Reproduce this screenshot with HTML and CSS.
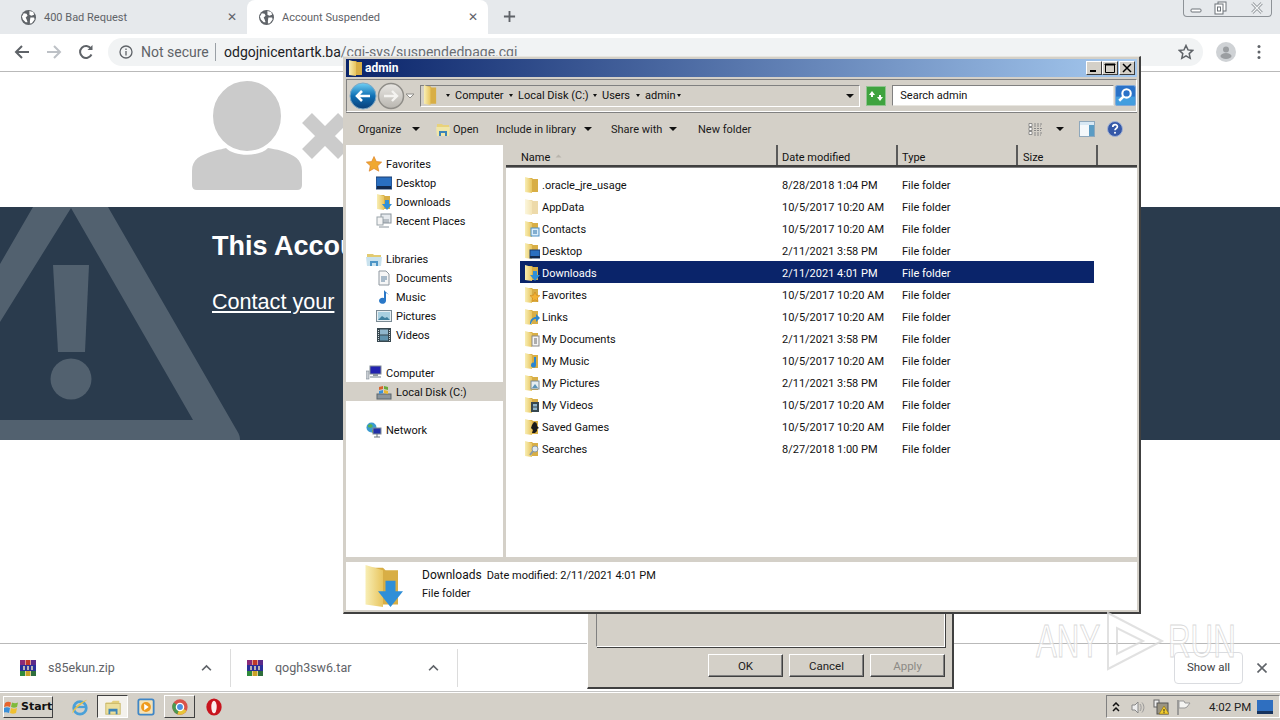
FILE: index.html
```html
<!DOCTYPE html>
<html lang="en">

<head>
    <meta charset="UTF-8">
    <title>Account Suspended</title>
    <link rel="stylesheet" href="styles.css">
</head>

<body>
    <svg class="sprite" width="0" height="0">
        <defs>
            <linearGradient id="flap" x1="0" x2="1" y1="0" y2="0">
                <stop offset="0" stop-color="#f8eeb4" />
                <stop offset="1" stop-color="#e8c55f" />
            </linearGradient>
            <linearGradient id="backBlue" x1="0" x2="0" y1="0" y2="1">
                <stop offset="0" stop-color="#6fd0f5" />
                <stop offset="0.5" stop-color="#0f6fb4" />
                <stop offset="1" stop-color="#0a3f78" />
            </linearGradient>
            <linearGradient id="backGrey" x1="0" x2="0" y1="0" y2="1">
                <stop offset="0" stop-color="#e8e6e2" />
                <stop offset="1" stop-color="#b9b6b0" />
            </linearGradient>
            <symbol id="folder" viewBox="0 0 16 16" preserveAspectRatio="none">
                <path d="M3 1h5l1 1h5v13H3z" fill="#d8ae45" />
                <path d="M1 0l7 2v14l-7-1z" fill="url(#flap)" />
            </symbol>
            <symbol id="ov-contacts" viewBox="0 0 16 16">
                <rect x="7" y="7" width="8" height="8" fill="#d8ecfa" stroke="#4d8fc4" />
                <path d="M9 10h4M9 12h4" stroke="#2b6ea6" />
            </symbol>
            <symbol id="ov-desktop" viewBox="0 0 16 16">
                <rect x="6" y="7" width="10" height="8" fill="#2a6fc0" stroke="#1d3f70" />
                <rect x="6" y="13" width="10" height="2" fill="#12294d" />
            </symbol>
            <symbol id="ov-down" viewBox="0 0 16 16">
                <path d="M9 6h4v4h3l-5 6-5-6h3z" fill="#2f8fd8" />
            </symbol>
            <symbol id="ov-star" viewBox="0 0 16 16">
                <path d="M11 5l1.500 3.200 3.500.4-2.600 2.400.7 3.500-3.100-1.800-3.100 1.800.7-3.500L6 8.600l3.500-.4z" fill="#f2b233" stroke="#c77f17" stroke-width=".5" />
            </symbol>
            <symbol id="ov-link" viewBox="0 0 16 16">
                <path d="M6 15c0-5 3-7 6-7V5l4 4-4 4v-3c-2 0-4 1-5 5z" fill="#2a86d0" />
            </symbol>
            <symbol id="ov-doc" viewBox="0 0 16 16">
                <rect x="8" y="5" width="7" height="10" fill="#f4f4f4" stroke="#8a8a8a" />
                <path d="M10 8h3M10 10h3M10 12h3" stroke="#666" />
            </symbol>
            <symbol id="ov-music" viewBox="0 0 16 16">
                <path d="M12 4v8a2.500 2.500 0 1 1-2-2.400V4z" fill="#2a86d0" />
            </symbol>
            <symbol id="ov-pic" viewBox="0 0 16 16">
                <rect x="7" y="6" width="8" height="8" fill="#e4edf2" stroke="#7a8a94" />
                <path d="M8 13l3-4 3 4z" fill="#5b94b8" />
            </symbol>
            <symbol id="ov-video" viewBox="0 0 16 16">
                <rect x="7" y="5" width="8" height="10" fill="#37474f" />
                <rect x="9" y="7" width="4" height="2.500" fill="#8fb6cc" />
                <rect x="9" y="10.500" width="4" height="2.500" fill="#8fb6cc" />
            </symbol>
            <symbol id="ov-game" viewBox="0 0 16 16">
                <path d="M10 3a3 3 0 0 1 3 3v1l2 2-2 1v2l-2 2H8l1-3-2-2 1-3z" fill="#1a1a1a" />
            </symbol>
            <symbol id="ov-search" viewBox="0 0 16 16">
                <circle cx="11" cy="8" r="3" fill="#dfe8ee" stroke="#8a9aa5" />
                <path d="M9 10l-3 4" stroke="#8a9aa5" stroke-width="2" />
            </symbol>
            <symbol id="winrar" viewBox="0 0 16 16">
                <rect x="0" y="0" width="5" height="5" fill="#8a2a78" />
                <rect x="5.500" y="0" width="5" height="5" fill="#c0392b" />
                <rect x="11" y="0" width="5" height="5" fill="#5b2a8a" />
                <rect x="0" y="5" width="16" height="6" fill="#2a2f9a" />
                <path d="M4 6v4M8 6v4M12 6v4" stroke="#e8e0c0" stroke-width="1.500" />
                <rect x="0" y="11" width="5" height="5" fill="#2f8a3c" />
                <rect x="5.500" y="11" width="5" height="5" fill="#c9a227" />
                <rect x="11" y="11" width="5" height="5" fill="#2f6e3c" />
            </symbol>
            <symbol id="globe" viewBox="0 0 16 16">
                <circle cx="8" cy="8" r="8" fill="#5f6368" />
                <path d="M3 3.500l3 .5 1 2-2 2 1 2 1 3-2 0-3-3-1-3zM9 1l4 1 1 3-3 1-2-1zM10 8l4 0 .5 2-3 4-2 .5 0-3z" fill="#fff" />
            </symbol>
        </defs>
    </svg>

    <div class="desktop">
        <div class="browser">
            <div class="tabstrip">
                <div class="tab">
                    <svg class="tab-globe"><use href="#globe" /></svg>
                    <span class="tab-title">400 Bad Request</span>
                    <span class="tab-close">&#10005;</span>
                </div>
                <div class="tab tab-active">
                    <svg class="tab-globe"><use href="#globe" /></svg>
                    <span class="tab-title">Account Suspended</span>
                    <span class="tab-close">&#10005;</span>
                </div>
                <svg class="tab-new" viewBox="0 0 14 14"><path d="M7 1v12M1 7h12" stroke="#5f6368" stroke-width="2" /></svg>
                <div class="caption-btns">
                    <svg class="cap cap-min" viewBox="0 0 29 16"><rect x="7" y="9" width="10" height="3" rx="1" fill="#fff" stroke="#6d7378" /></svg>
                    <svg class="cap cap-max" viewBox="0 0 29 16"><rect x="5" y="2" width="8" height="9" fill="#fff" stroke="#6d7378" /><rect x="2" y="4" width="8" height="10" fill="#fff" stroke="#6d7378" /><rect x="4.500" y="7" width="3" height="4" fill="none" stroke="#6d7378" /></svg>
                    <svg class="cap cap-x" viewBox="0 0 32 16"><path d="M11 3l10 10M21 3L11 13" stroke="#7d8388" stroke-width="3" /><path d="M11 3l10 10M21 3L11 13" stroke="#f4f6f7" stroke-width="1.500" /></svg>
                </div>
            </div>

            <div class="toolbar">
                <svg class="tool-ico" viewBox="0 0 16 16"><path d="M15 8H2M8 2L2 8l6 6" fill="none" stroke="#5f6368" stroke-width="2" /></svg>
                <svg class="tool-ico" viewBox="0 0 16 16"><path d="M1 8h13M8 2l6 6-6 6" fill="none" stroke="#bdc1c6" stroke-width="2" /></svg>
                <svg class="tool-ico" viewBox="0 0 16 16"><path d="M13.500 10.500A6 6 0 1 1 13 4.500" fill="none" stroke="#5f6368" stroke-width="2" /><path d="M14.500 1v5h-5z" fill="#5f6368" /></svg>
                <div class="omnibox">
                    <svg class="info-ico" viewBox="0 0 14 14"><circle cx="7" cy="7" r="6" fill="none" stroke="#5f6368" stroke-width="1.300" /><path d="M7 6v4.500M7 3.500v1.500" stroke="#5f6368" stroke-width="1.300" /></svg>
                    <span class="not-secure">Not secure</span>
                    <span class="omni-sep"></span>
                    <span class="url">odgojnicentartk.ba<span class="url-path">/cgi-sys/suspendedpage.cgi</span></span>
                    <svg class="star-ico" viewBox="0 0 16 16"><path d="M8 1.500l2 4.400 4.800.5-3.600 3.200 1 4.700L8 11.900l-4.200 2.400 1-4.700L1.200 6.400 6 5.900z" fill="none" stroke="#5f6368" stroke-width="1.500" /></svg>
                </div>
                <svg class="avatar" viewBox="0 0 20 20"><circle cx="10" cy="10" r="10" fill="#cfd2d5" /><circle cx="10" cy="7.500" r="3" fill="#9b9ea1" /><ellipse cx="10" cy="14" rx="5.500" ry="3" fill="#9b9ea1" /></svg>
                <svg class="menu-dots" viewBox="0 0 4 16"><circle cx="2" cy="2.500" r="1.500" fill="#5f6368" /><circle cx="2" cy="8" r="1.500" fill="#5f6368" /><circle cx="2" cy="13.500" r="1.500" fill="#5f6368" /></svg>
            </div>

            <div class="page">
                <svg class="user-ico" viewBox="0 0 160 110">
                    <path d="M0 109V90C0 78 8 74 22 70c6-2 10-2 12-3 8 9 34 9 42 0 4 1 8 1 14 3 12 4 20 8 20 20v14q0 5-5 5H5q-5 0-5-5z" fill="#cbcbcb" />
                    <ellipse cx="55" cy="35" rx="35.500" ry="36.500" fill="#cbcbcb" stroke="#fff" stroke-width="3" />
                    <path d="M115 37l36 36M151 37l-36 36" stroke="#cbcbcb" stroke-width="14" />
                </svg>
                <div class="banner">
                    <svg class="banner-ico" viewBox="0 0 240 233">
                        <path d="M33 0h75l128 222c3 5 4 7 4 11H0v-176zM71 1L0 115v98h193z" fill="#52616f" fill-rule="evenodd" />
                        <path d="M53 58h36l-4 87H58z" fill="#52616f" />
                        <circle cx="71" cy="172" r="20.500" fill="#52616f" />
                    </svg>
                    <!-- the explorer window hides the rest of both lines -->
                    <h1 class="banner-title">This Account</h1>
                    <a class="banner-link">Contact your</a>
                </div>
            </div>

            <div class="downloads">
                <div class="dl-item">
                    <svg class="dl-ico"><use href="#winrar" /></svg>
                    <span class="dl-name">s85ekun.zip</span>
                    <svg class="dl-chev" viewBox="0 0 10 6"><path d="M1 5.500l4-4 4 4" fill="none" stroke="#5f6368" stroke-width="1.500" /></svg>
                </div>
                <div class="dl-item">
                    <svg class="dl-ico"><use href="#winrar" /></svg>
                    <span class="dl-name">qogh3sw6.tar</span>
                    <svg class="dl-chev" viewBox="0 0 10 6"><path d="M1 5.500l4-4 4 4" fill="none" stroke="#5f6368" stroke-width="1.500" /></svg>
                </div>
                <span class="dl-show">Show all</span>
                <svg class="dl-close" viewBox="0 0 10 10"><path d="M.5.500l9 9M9.500.500l-9 9" stroke="#5f6368" stroke-width="1.600" /></svg>
            </div>
        </div>

        <div class="taskbar">
            <div class="start-btn">
                <svg class="start-logo" viewBox="0 0 16 16">
                    <path d="M1 4c2-1.500 4-1.500 6-.5L6 8C4 7 2.500 7 0 8z" fill="#e8642c" />
                    <path d="M8 3.500c2 1 4 1 6 0L13 8c-2 1-4 1-6 0z" fill="#7fba3a" />
                    <path d="M0 9c2-1 4-1 6 0l-1 5c-2-1-4-1-6 0z" fill="#3a8fd8" />
                    <path d="M7 9c2 1 4 1 6 0l-1 5c-2 1-4 1-6 0z" fill="#f0c030" />
                </svg>
                Start
            </div>
            <svg class="task-ico task-ie" viewBox="0 0 20 20"><ellipse cx="10" cy="11" rx="7" ry="7" fill="none" stroke="#4aa0d8" stroke-width="3" /><path d="M4 10h13" stroke="#4aa0d8" stroke-width="2.500" /><path d="M2 17C0 13 12 3 18 2c-3 3-12 8-16 15z" fill="#e8c24a" /></svg>
            <div class="task-btn task-btn-on">
                <svg class="task-ico" viewBox="0 0 20 20"><path d="M2 5h6l2-2h7v4H2z" fill="#e3cf7c" /><rect x="2" y="6" width="16" height="12" fill="#ecdf9b" stroke="#c9b76a" /><path d="M5 18v-6h10v6h-2v-3H7v3z" fill="#3d85b8" /></svg>
            </div>
            <svg class="task-ico task-wmp" viewBox="0 0 20 20"><rect x="1.500" y="1.500" width="17" height="17" rx="2" fill="#f4e2b8" stroke="#3f86c6" stroke-width="2" /><circle cx="10" cy="10" r="5.500" fill="#ee9a1e" /><path d="M8 6.500l5 3.500-5 3.500z" fill="#fff" /></svg>
            <div class="task-btn task-btn-up">
                <svg class="task-ico" viewBox="0 0 20 20"><circle cx="10" cy="10" r="8.500" fill="#d9534a" /><path d="M10 10L2.600 14.200A8.500 8.500 0 0 1 3 5z" fill="#4a9a50" /><path d="M10 10l7.400 4.200A8.500 8.500 0 0 1 7 18z" fill="#e8c53a" /><path d="M10 10L7 18a8.500 8.500 0 0 1-4.400-3.800z" fill="#4a9a50" /><circle cx="10" cy="10" r="4" fill="#4a8fe0" stroke="#fff" stroke-width="1.500" /></svg>
            </div>
            <svg class="task-ico task-opera" viewBox="0 0 20 20"><ellipse cx="10" cy="10" rx="8.500" ry="9.500" fill="#c8141e" /><ellipse cx="10" cy="10" rx="3" ry="7" fill="#fbeeee" /></svg>
            <div class="tray">
                <svg class="tray-chev" viewBox="0 0 8 10"><path d="M1 4l3-3 3 3M1 9l3-3 3 3" fill="none" stroke="#111" stroke-width="1.500" /></svg>
                <svg class="tray-ico tray-speaker" viewBox="0 0 16 16"><path d="M3 6h3l3-3v11l-3-3H3z" fill="#eee" stroke="#888" /><path d="M11 5c1.500 2 1.500 5 0 7M13 3.500c2.500 3 2.500 7 0 10" fill="none" stroke="#999" /></svg>
                <svg class="tray-ico tray-net" viewBox="0 0 16 16"><rect x="1" y="1" width="5" height="7" fill="#eee" stroke="#666" /><rect x="4" y="4" width="11" height="11" fill="#9a9482" stroke="#555" /><path d="M11 7l5 8H6z" fill="#f2cc2e" stroke="#8a6d10" stroke-width=".6" /><path d="M11 10v2.500M11 13.200v1" stroke="#222" /></svg>
                <svg class="tray-ico tray-flag" viewBox="0 0 16 16"><path d="M3 1v15" stroke="#888" stroke-width="1.500" /><path d="M4 2h5l1 2h5l-3 4-2 1H4z" fill="#f4f4f2" stroke="#999" /></svg>
                <span class="clock">4:02 PM</span>
                <svg class="tray-ico tray-desk" viewBox="0 0 16 16"><rect x="0" y="1" width="16" height="14" fill="#2f6fc0" /><rect x="0" y="12" width="16" height="3" fill="#16335e" /></svg>
            </div>
        </div>

        <!-- dialog behind the explorer window -->
        <div class="props">
            <div class="props-group"></div>
            <div class="props-btns">
                <span class="win-btn">OK</span>
                <span class="win-btn">Cancel</span>
                <span class="win-btn win-btn-off">Apply</span>
            </div>
        </div>

        <div class="explorer">
            <div class="titlebar">
                <svg class="title-ico"><use href="#folder" /></svg>
                <span class="title-text">admin</span>
                <div class="title-btns">
                    <span class="title-btn"><svg viewBox="0 0 14 12"><rect x="3" y="8" width="6" height="2" fill="#000" /></svg></span>
                    <span class="title-btn"><svg viewBox="0 0 14 12"><path d="M2.500 2.500h9v8h-9zM2 2h10v1H2z" fill="none" stroke="#000" /></svg></span>
                    <span class="title-btn title-btn-x"><svg viewBox="0 0 14 12"><path d="M3 2l8 8M11 2l-8 8" stroke="#000" stroke-width="1.500" /></svg></span>
                </div>
            </div>

            <div class="addressrow">
                <svg class="nav-btns" viewBox="0 0 70 30">
                    <circle cx="15" cy="15" r="13" fill="url(#backBlue)" stroke="#7fa8c4" />
                    <path d="M22 15H10M14 10l-5 5 5 5" fill="none" stroke="#fff" stroke-width="2.600" />
                    <circle cx="43" cy="15" r="12.500" fill="url(#backGrey)" stroke="#8f8d88" stroke-width="1.500" />
                    <path d="M36 15h12M44 10l5 5-5 5" fill="none" stroke="#f4f3f0" stroke-width="2.400" />
                    <path d="M58 13l4 4 4-4z" fill="#fff" stroke="#8f8d88" />
                </svg>
                <div class="addressbox">
                    <svg class="crumb-folder"><use href="#folder" /></svg>
                    <span class="caret crumb-caret"></span><span class="crumb crumb-1">Computer</span>
                    <span class="caret crumb-caret"></span><span class="crumb crumb-2">Local Disk (C:)</span>
                    <span class="caret crumb-caret"></span><span class="crumb crumb-3">Users</span>
                    <span class="caret crumb-caret"></span><span class="crumb crumb-4">admin</span>
                    <span class="caret crumb-caret"></span>
                    <span class="caret caret-big address-drop"></span>
                </div>
                <svg class="refresh-btn" viewBox="0 0 20 20">
                    <rect x=".5" y=".5" width="19" height="19" fill="#3fa33f" stroke="#8fc48f" />
                    <path d="M3 9l3-4 3 4H7v2H5V9zM17 11l-3 4-3-4h2V9h2v2z" fill="#fff" />
                </svg>
                <div class="searchbox">Search admin</div>
                <svg class="search-btn" viewBox="0 0 20 20">
                    <rect x=".5" y=".5" width="19" height="19" rx="2" fill="#2a72c8" stroke="#7fa8d8" />
                    <rect x="1" y="11" width="18" height="8" fill="#4fb0e8" opacity=".7" />
                    <circle cx="11" cy="8" r="4" fill="none" stroke="#fff" stroke-width="2" />
                    <path d="M8 11l-4 4" stroke="#fff" stroke-width="2.400" />
                </svg>
            </div>

            <div class="cmdbar">
                <span class="cmd cmd-org">Organize<span class="caret caret-big"></span></span>
                <span class="cmd cmd-open">
                    <svg class="ico" viewBox="0 0 16 16"><path d="M2 3h5l1 1h6v10H2z" fill="#e8d27c" /><path d="M1 6h14l-1 9H2z" fill="#f0e6a8" /><path d="M4 15v-5h8v5h-2v-3H6v3z" fill="#3d85b8" /></svg>
                    Open
                </span>
                <span class="cmd cmd-lib">Include in library<span class="caret caret-big"></span></span>
                <span class="cmd cmd-share">Share with<span class="caret caret-big"></span></span>
                <span class="cmd">New folder</span>
                <div class="cmd-right">
                    <svg class="view-ico" viewBox="0 0 16 14"><path d="M1 1.500h3v3H1zM1 5.500h3v3H1zM1 9.500h3v3H1z" fill="#fff" stroke="#777" stroke-width=".8" /><path d="M6 2h9M6 4h7M6 6.500h9M6 8.500h7M6 11h9M6 13h7" stroke="#888" stroke-dasharray="2 1" /></svg>
                    <span class="caret caret-big view-caret"></span>
                    <svg class="pane-ico" viewBox="0 0 16 16"><rect x=".5" y=".5" width="15" height="15" fill="#f4f8fb" stroke="#8fa8bc" /><rect x="1" y="1" width="14" height="3" fill="#d8e8f4" /><rect x="10" y="4" width="5" height="11" fill="#5b9cc4" /></svg>
                    <svg class="help-ico" viewBox="0 0 16 16"><circle cx="8" cy="8" r="7.500" fill="#3558a8" stroke="#9fb0d4" /><path d="M5.800 6c0-3 4.600-3 4.600-.3 0 1.800-2.400 1.800-2.400 3.500" fill="none" stroke="#fff" stroke-width="1.700" /><circle cx="8" cy="11.800" r="1" fill="#fff" /></svg>
                </div>
            </div>

            <div class="panes">
                <div class="navpane">
                    <div class="nav-group">
                        <div class="nav-item nav-top"><svg class="ico" viewBox="0 0 16 16"><path d="M8 .5l2.300 5 5.400.6-4 3.700 1.100 5.400L8 12.500l-4.800 2.700 1.100-5.400-4-3.700 5.400-.6z" fill="#f0a830" stroke="#d87a20" stroke-width=".6" /></svg>Favorites</div>
                        <div class="nav-item"><svg class="ico" viewBox="0 0 16 16"><rect x="0" y="2" width="16" height="12" fill="#2a6fc0" stroke="#1d3f70" /><rect x="1" y="11" width="14" height="3" fill="#12294d" /></svg>Desktop</div>
                        <div class="nav-item"><svg class="ico"><use href="#folder" /><use href="#ov-down" /></svg>Downloads</div>
                        <div class="nav-item"><svg class="ico" viewBox="0 0 16 16"><rect x="5" y="1" width="10" height="9" fill="#e6eaee" stroke="#8a949c" /><rect x="1" y="4" width="6" height="8" fill="#f4f4f4" stroke="#9aa4aa" /><path d="M7 7h6M7 9h6M3 14h10" stroke="#8a949c" /></svg>Recent Places</div>
                    </div>
                    <div class="nav-group">
                        <div class="nav-item nav-top"><svg class="ico" viewBox="0 0 16 16"><path d="M1 3h6l1 1h7v10H1z" fill="#e2cb72" /><path d="M0 6h16l-1 9H1z" fill="#c9e2ee" /><path d="M4 15v-5h8v5h-2v-3H6v3z" fill="#4d95c6" /></svg>Libraries</div>
                        <div class="nav-item"><svg class="ico" viewBox="0 0 16 16"><path d="M3 1h7l3 3v11H3z" fill="#f6f6f6" stroke="#8f98a0" /><path d="M5 7h6M5 9h6M5 11h4" stroke="#5b7f9c" /></svg>Documents</div>
                        <div class="nav-item"><svg class="ico" viewBox="0 0 16 16"><path d="M10 1v11a3.500 3 0 1 1-2-3V1c1 2 4 3 5 5-1-1-2-1.500-3-2z" fill="#2a78c8" /></svg>Music</div>
                        <div class="nav-item"><svg class="ico" viewBox="0 0 16 16"><rect x=".5" y="2.500" width="15" height="11" fill="#e6eef2" stroke="#7a8a94" /><rect x="2" y="4" width="12" height="8" fill="#a8cfe0" /><path d="M2 12l4-4 3 2 2-1 3 3z" fill="#3e7f9e" /></svg>Pictures</div>
                        <div class="nav-item"><svg class="ico" viewBox="0 0 16 16"><rect x="1" y="1" width="14" height="14" fill="#37474f" /><rect x="4" y="2.500" width="8" height="5" fill="#8fb6cc" /><rect x="4" y="8.500" width="8" height="5" fill="#5f92ad" /><path d="M2.500 3v11M13.500 3v11" stroke="#cfd8dc" stroke-dasharray="1 1" /></svg>Videos</div>
                    </div>
                    <div class="nav-group">
                        <div class="nav-item nav-top"><svg class="ico" viewBox="0 0 16 16"><rect x="4" y="1" width="11" height="8" fill="#2222b0" stroke="#7f8a94" /><rect x="7" y="9" width="5" height="2" fill="#8f98a0" /><rect x="4" y="11" width="11" height="2" fill="#b8c0c6" /><rect x="0" y="6" width="3" height="8" fill="#c8cdd2" stroke="#7f8a94" stroke-width=".6" /></svg>Computer</div>
                        <div class="nav-item nav-on"><svg class="ico" viewBox="0 0 16 16"><rect x="1" y="10" width="14" height="5" fill="#8a949c" stroke="#5d666c" /><path d="M3 3l4-1v3l-4 1z" fill="#d8642c" /><path d="M8 2l4 1v3l-4-1z" fill="#6aa83a" /><path d="M3 7l4-1v3l-4 1z" fill="#3a8fd8" /><path d="M8 6l4 1v3l-4-1z" fill="#eab82f" /></svg>Local Disk (C:)</div>
                    </div>
                    <div class="nav-group">
                        <div class="nav-item nav-top"><svg class="ico" viewBox="0 0 16 16"><circle cx="5.500" cy="5.500" r="5" fill="#3a9ad0" /><path d="M2 3l3-1 2 2-2 2-3-1zM6 8l2 0 0 2-2 1z" fill="#58b050" /><rect x="7" y="6" width="8" height="6" fill="#2230a8" stroke="#7f8a94" /><path d="M11 12v3M8 15h6" stroke="#6a747c" /></svg>Network</div>
                    </div>
                </div>

                <div class="content">
                    <div class="colhead">
                        <span class="col col-name">Name<svg class="sort-ico" viewBox="0 0 7 4"><path d="M3.500.5L6.500 3.500H.5z" fill="#b8b4ac" /></svg></span>
                        <span class="col col-date">Date modified</span>
                        <span class="col col-type">Type</span>
                        <span class="col col-size">Size</span>
                        <span class="col col-rest"></span>
                    </div>
                    <div class="filelist">
                        <div class="row"><span class="cell-name"><svg class="ico"><use href="#folder" /></svg>.oracle_jre_usage</span><span class="cell-date">8/28/2018 1:04 PM</span><span>File folder</span></div>
                        <div class="row"><span class="cell-name"><svg class="ico ico-hidden"><use href="#folder" /></svg>AppData</span><span class="cell-date">10/5/2017 10:20 AM</span><span>File folder</span></div>
                        <div class="row"><span class="cell-name"><svg class="ico"><use href="#folder" /><use href="#ov-contacts" /></svg>Contacts</span><span class="cell-date">10/5/2017 10:20 AM</span><span>File folder</span></div>
                        <div class="row"><span class="cell-name"><svg class="ico"><use href="#folder" /><use href="#ov-desktop" /></svg>Desktop</span><span class="cell-date">2/11/2021 3:58 PM</span><span>File folder</span></div>
                        <div class="row row-on"><span class="cell-name"><svg class="ico"><use href="#folder" /><use href="#ov-down" /></svg>Downloads</span><span class="cell-date">2/11/2021 4:01 PM</span><span>File folder</span></div>
                        <div class="row"><span class="cell-name"><svg class="ico"><use href="#folder" /><use href="#ov-star" /></svg>Favorites</span><span class="cell-date">10/5/2017 10:20 AM</span><span>File folder</span></div>
                        <div class="row"><span class="cell-name"><svg class="ico"><use href="#folder" /><use href="#ov-link" /></svg>Links</span><span class="cell-date">10/5/2017 10:20 AM</span><span>File folder</span></div>
                        <div class="row"><span class="cell-name"><svg class="ico"><use href="#folder" /><use href="#ov-doc" /></svg>My Documents</span><span class="cell-date">2/11/2021 3:58 PM</span><span>File folder</span></div>
                        <div class="row"><span class="cell-name"><svg class="ico"><use href="#folder" /><use href="#ov-music" /></svg>My Music</span><span class="cell-date">10/5/2017 10:20 AM</span><span>File folder</span></div>
                        <div class="row"><span class="cell-name"><svg class="ico"><use href="#folder" /><use href="#ov-pic" /></svg>My Pictures</span><span class="cell-date">2/11/2021 3:58 PM</span><span>File folder</span></div>
                        <div class="row"><span class="cell-name"><svg class="ico"><use href="#folder" /><use href="#ov-video" /></svg>My Videos</span><span class="cell-date">10/5/2017 10:20 AM</span><span>File folder</span></div>
                        <div class="row"><span class="cell-name"><svg class="ico"><use href="#folder" /><use href="#ov-game" /></svg>Saved Games</span><span class="cell-date">10/5/2017 10:20 AM</span><span>File folder</span></div>
                        <div class="row"><span class="cell-name"><svg class="ico"><use href="#folder" /><use href="#ov-search" /></svg>Searches</span><span class="cell-date">8/27/2018 1:00 PM</span><span>File folder</span></div>
                    </div>
                </div>
            </div>

            <div class="details">
                <svg class="details-ico" viewBox="0 0 16 16" preserveAspectRatio="none"><use href="#folder" /><use href="#ov-down" /></svg>
                <div class="details-text">
                    <div class="details-line"><span class="details-name">Downloads</span><span>Date modified: 2/11/2021 4:01 PM</span></div>
                    <div>File folder</div>
                </div>
            </div>
        </div>

        <!-- watermark over everything -->
        <div class="watermark">
            <span class="wm-text">ANY</span>
            <svg class="wm-play" viewBox="0 0 60 62"><path d="M3 3v56l54-28zM12 18v26l26-13z" fill="none" stroke="#d9d9d9" stroke-width="2" opacity=".8" /></svg>
            <span class="wm-text">RUN</span>
        </div>
    </div>
</body>

</html>
```
FILE: styles.css
```css
* {
    margin: 0;
    padding: 0;
    box-sizing: border-box;
}

body {
    width: 1280px;
    height: 720px;
    overflow: hidden;
    font-family: Roboto, "Liberation Sans", sans-serif;
    font-size: 11px;
    color: #111;
}

.sprite {
    position: absolute;
}

svg {
    display: block;
    flex: none;
}

.desktop {
    position: relative;
    width: 1280px;
    height: 720px;
    overflow: hidden;
    display: flex;
    flex-direction: column;
    background: #fff;
}

.browser {
    flex: 1;
    display: flex;
    flex-direction: column;
    min-height: 0;
}

/* tab strip */
.tabstrip {
    height: 34px;
    flex: none;
    display: flex;
    background: #e6e9ec;
    padding-left: 8px;
    position: relative;
}

.tab {
    width: 239px;
    height: 34px;
    display: flex;
    align-items: center;
    padding: 0 10px 0 13px;
    color: #5f6368;
    font-size: 11px;
}

.tab-active {
    background: #fff;
    border-radius: 8px 8px 0 0;
    width: 241px;
    padding-left: 12px;
}

.tab-globe {
    width: 15px;
    height: 15px;
    margin-right: 8px;
}

.tab-title {
    flex: 1;
}

.tab-close {
    font-size: 12px;
    color: #5f6368;
}

.tab-new {
    width: 13px;
    height: 13px;
    margin: 10px 0 0 15px;
}

.caption-btns {
    position: absolute;
    right: 8px;
    top: 0;
    height: 17px;
    width: 89px;
    display: flex;
    border: 1px solid #8d9297;
    border-top: 0;
    border-radius: 0 0 4px 4px;
}

.cap {
    height: 16px;
    width: 29px;
}

.cap-x {
    width: 30px;
    margin-left: auto;
}

/* address toolbar */
.toolbar {
    height: 38px;
    flex: none;
    display: flex;
    align-items: center;
    padding: 0 14px 1px;
    background: #fff;
    border-bottom: 1px solid #b9b9b9;
}

.tool-ico {
    width: 16px;
    height: 16px;
    margin-right: 16px;
}

.tool-ico:nth-child(3) {
    margin-right: 14px;
}

.omnibox {
    width: 1095px;
    height: 28px;
    display: flex;
    align-items: center;
    border-radius: 14px;
    background: #f1f3f4;
    padding-left: 11px;
    color: #5f6368;
}

.info-ico {
    width: 14px;
    height: 14px;
    margin-right: 8px;
}

.not-secure {
    font-size: 14px;
    width: 74px;
}

.omni-sep {
    width: 1px;
    height: 18px;
    background: #9aa0a6;
    margin-right: 8px;
}

.url {
    font-size: 14px;
    color: #202124;
    flex: 1;
}

.url-path {
    color: #6a6e73;
}

.star-ico {
    width: 16px;
    height: 16px;
    margin-right: 9px;
}

.avatar {
    width: 20px;
    height: 20px;
    margin-left: 13px;
}

.menu-dots {
    width: 4px;
    height: 16px;
    margin-left: 21px;
}

/* page behind the windows */
.page {
    flex: 1;
    background: #fff;
    min-height: 0;
}

.user-ico {
    width: 160px;
    height: 110px;
    margin: 9px 0 0 192px;
}

.banner {
    position: relative;
    height: 233px;
    margin-top: 16px;
    background: #2a3b4d;
    padding: 23px 0 0 212px;
    color: #fff;
    font-family: "Liberation Sans", Arial, sans-serif;
}

.banner-ico {
    position: absolute;
    left: 0;
    top: 0;
    width: 240px;
    height: 233px;
}

.banner-title {
    position: relative;
    font-size: 27px;
    line-height: 32px;
    font-weight: bold;
}

.banner-link {
    position: relative;
    display: inline-block;
    font-size: 21.600px;
    line-height: 26px;
    margin-top: 27px;
    text-decoration: underline;
}

/* download shelf */
.downloads {
    height: 49px;
    flex: none;
    display: flex;
    align-items: center;
    border-top: 1px solid #b9b9b9;
    border-bottom: 1px solid #c4c4c4;
    background: #fff;
}

.dl-item {
    width: 227px;
    height: 38px;
    display: flex;
    align-items: center;
    padding: 0 18px 0 16px;
    border-right: 1px solid #dcdcdc;
    color: #5f6368;
    font-size: 12.500px;
}

.dl-item:first-child {
    width: 231px;
    padding-left: 20px;
}

.dl-ico {
    width: 16px;
    height: 16px;
    margin-right: 12px;
}

.dl-name {
    flex: 1;
}

.dl-chev {
    width: 11px;
    height: 7px;
}

.dl-show {
    margin-left: auto;
    width: 69px;
    height: 32px;
    display: flex;
    align-items: center;
    justify-content: center;
    padding-bottom: 2px;
    border: 1px solid #dadce0;
    border-radius: 4px;
    color: #3c4043;
    font-size: 11.500px;
}

.dl-close {
    width: 10px;
    height: 10px;
    margin: 0 13px 0 14px;
}

/* windows taskbar */
.taskbar {
    height: 28px;
    flex: none;
    display: flex;
    align-items: center;
    background: #d4d0c8;
    border-top: 1px solid #fff;
    padding: 0 0 0 3px;
}

.start-btn {
    width: 50px;
    height: 22px;
    display: flex;
    align-items: center;
    font-weight: bold;
    font-size: 11px;
    font-family: "DejaVu Sans", sans-serif;
    gap: 1px;
    background: #d4d0c8;
    border: 1px solid;
    border-color: #fff #404040 #404040 #fff;
}

.start-logo {
    width: 16px;
    height: 16px;
}

.task-ico {
    width: 18px;
    height: 18px;
}

.task-ie {
    margin-left: 18px;
}

.task-btn {
    height: 23px;
    display: flex;
    align-items: center;
    justify-content: center;
    border: 1px solid;
}

.task-btn-on {
    width: 31px;
    margin-left: 8px;
    background: #f3f1ec;
    border-color: #404040 #fff #fff #404040;
}

.task-btn-up {
    width: 31px;
    margin-left: 9px;
    border-color: #fff #404040 #404040 #fff;
}

.task-wmp {
    margin-left: 9px;
}

.task-opera {
    margin-left: 10px;
}

.tray {
    margin-left: auto;
    width: 174px;
    height: 23px;
    display: flex;
    align-items: center;
    border: 1px solid;
    border-color: #808080 #fff #fff #808080;
    padding-left: 5px;
}

.tray-chev {
    width: 8px;
    height: 10px;
}

.tray-ico {
    width: 16px;
    height: 16px;
}

.tray-speaker {
    margin-left: 9px;
}

.tray-net {
    margin-left: 8px;
}

.tray-flag {
    margin-left: 6px;
}

.clock {
    margin-left: 18px;
    width: 48px;
    color: #222;
    font-size: 11.500px;
}

/* dialog under the explorer window */
.props {
    position: absolute;
    left: 587px;
    top: 600px;
    width: 367px;
    height: 89px;
    display: flex;
    flex-direction: column;
    background: #d4d0c8;
    border: 1px solid;
    border-color: #fff #404040 #404040 #fff;
    border-width: 1px 2px 2px 1px;
    padding: 0 7px 10px 8px;
}

.props-group {
    flex: 1;
    border: 1px solid;
    border-color: #808080 #fff #fff #808080;
    box-shadow: 1px 1px 0 #404040;
    background: #d4d0c8;
    margin-bottom: 7px;
}

.props-btns {
    display: flex;
    justify-content: flex-end;
    gap: 6px;
}

.win-btn {
    width: 75px;
    height: 23px;
    display: flex;
    align-items: center;
    justify-content: center;
    background: #d4d0c8;
    border: 1px solid;
    border-color: #fff #404040 #404040 #fff;
    box-shadow: inset -1px -1px 0 #808080;
    font-size: 11.500px;
    color: #222;
}

.win-btn-off {
    color: #8c8a85;
}

/* explorer window */
.explorer {
    position: absolute;
    left: 343px;
    top: 56px;
    width: 798px;
    height: 558px;
    display: flex;
    flex-direction: column;
    background: #d4d0c8;
    border: 1px solid;
    border-width: 1px 2px 2px 1px;
    border-color: #e8e6e0 #404040 #404040 #d4d0c8;
    padding: 2px;
}

.titlebar {
    height: 18px;
    flex: none;
    display: flex;
    align-items: center;
    padding: 0 2px;
    background: linear-gradient(to right, #0a246a, #a6caf0);
    color: #fff;
    font-weight: bold;
    font-size: 12px;
}

.title-ico {
    width: 16px;
    height: 16px;
    margin-right: 1px;
}

.title-btns {
    margin-left: auto;
    display: flex;
}

.title-btn {
    width: 16px;
    height: 14px;
    background: #d4d0c8;
    border: 1px solid;
    border-color: #fff #404040 #404040 #fff;
}

.title-btn-x {
    margin-left: 1px;
}

.title-btn svg {
    width: 14px;
    height: 12px;
}

.addressrow {
    height: 33px;
    flex: none;
    margin-top: 2px;
    display: flex;
    align-items: center;
    border: 1px solid;
    border-color: #808080 #fff #fff #808080;
    box-shadow: 0 1px 0 #808080;
    padding-left: 1px;
}

.nav-btns {
    width: 70px;
    height: 30px;
    margin-right: 2px;
}

.addressbox {
    width: 441px;
    height: 22px;
    display: flex;
    align-items: center;
    padding-bottom: 1px;
    border: 1px solid;
    border-color: #808080 #fff #fff #808080;
    padding-left: 2px;
    position: relative;
}

.crumb-folder {
    width: 15px;
    height: 20px;
    margin-right: 8px;
}

.caret {
    display: inline-block;
    flex: none;
    width: 0;
    height: 0;
    border-left: 2.500px solid transparent;
    border-right: 2.500px solid transparent;
    border-top: 3px solid #111;
}

.caret-big {
    border-left-width: 4px;
    border-right-width: 4px;
    border-top-width: 4px;
}

.crumb-caret {
    margin-right: 5px;
}

.crumb {
    white-space: nowrap;
}

.crumb-1 {
    width: 54px;
}

.crumb-2 {
    width: 75px;
}

.crumb-3 {
    width: 34px;
}

.crumb-4 {
    width: 32px;
}

.address-drop {
    position: absolute;
    right: 5px;
    top: 8px;
}

.refresh-btn {
    width: 20px;
    height: 20px;
    margin-left: 6px;
}

.searchbox {
    width: 222px;
    height: 21px;
    margin-left: 6px;
    background: #fff;
    border: 1px solid;
    border-color: #808080 #e8e6e0 #e8e6e0 #808080;
    padding-left: 7px;
    line-height: 19px;
}

.search-btn {
    width: 21px;
    height: 21px;
    margin-left: 1px;
}

.cmdbar {
    height: 33px;
    flex: none;
    display: flex;
    align-items: center;
    padding: 1px 0 0 12px;
    color: #1a1a1a;
}

.cmd {
    display: flex;
    align-items: center;
}

.cmd .caret {
    margin-left: 7px;
}

.cmd-org {
    width: 77px;
}

.cmd-org .caret {
    margin-left: 11px;
}

.cmd-open {
    width: 61px;
    gap: 2px;
}

.cmd-lib {
    width: 115px;
}

.cmd-lib .caret {
    margin-left: 8px;
}

.cmd-share {
    width: 87px;
}

.cmd-right {
    margin-left: auto;
    display: flex;
    align-items: center;
    padding-right: 14px;
}

.view-ico {
    width: 16px;
    height: 14px;
}

.view-caret {
    margin-left: 12px;
}

.pane-ico {
    width: 16px;
    height: 16px;
    margin-left: 15px;
}

.help-ico {
    width: 16px;
    height: 16px;
    margin-left: 12px;
}

.panes {
    flex: 1;
    min-height: 0;
    display: flex;
    gap: 3px;
}

.navpane {
    width: 157px;
    background: #fff;
    padding-top: 9px;
}

.nav-group {
    margin-bottom: 19px;
}

.nav-item {
    height: 19px;
    display: flex;
    align-items: center;
    gap: 4px;
    padding: 1px 0 0 30px;
}

.nav-top {
    padding-left: 20px;
}

.nav-on {
    background: #d4d0c8;
}

.ico {
    width: 16px;
    height: 16px;
}

.ico-hidden {
    opacity: .45;
}

.content {
    flex: 1;
    background: #fff;
    display: flex;
    flex-direction: column;
}

.colhead {
    height: 22px;
    flex: none;
    display: flex;
    background: #d4d0c8;
    border-bottom: 2px solid #404040;
    box-shadow: 0 1px 0 #808080;
}

.col {
    display: flex;
    align-items: center;
    border-right: 2px solid #5a5a5a;
    padding: 5px 0 0 5px;
}

.col-name {
    width: 272px;
    padding-left: 15px;
}

.col-date,
.col-type {
    width: 120px;
    padding-left: 4px;
}

.col-size {
    width: 80px;
}

.col-rest {
    flex: 1;
    border-right: 0;
}

.sort-ico {
    width: 7px;
    height: 4px;
    margin: 0 0 4px 5px;
}

.filelist {
    padding: 6px 0 0 14px;
}

.row {
    width: 574px;
    height: 22px;
    display: flex;
    align-items: center;
    padding-top: 2px;
}

.row-on {
    background: #0a246a;
    color: #fff;
}

.cell-name {
    width: 262px;
    display: flex;
    align-items: center;
    gap: 2px;
    padding-left: 4px;
}

.cell-date {
    width: 120px;
}

.details {
    height: 48px;
    flex: none;
    margin-top: 5px;
    background: #fff;
    display: flex;
    align-items: center;
    padding-left: 17px;
}

.details-ico {
    width: 40px;
    height: 42px;
    margin-right: 19px;
}

.details-text {
    display: flex;
    flex-direction: column;
    gap: 5px;
    margin-bottom: 4px;
}

.details-line {
    display: flex;
    align-items: baseline;
    gap: 5px;
}

.details-name {
    font-size: 12px;
}

/* any.run mark */
.watermark {
    position: absolute;
    left: 1036px;
    top: 610px;
    display: flex;
    align-items: center;
    gap: 3px;
    pointer-events: none;
}

.wm-text {
    width: 66px;
    font-family: "Liberation Sans", sans-serif;
    font-size: 46px;
    color: rgba(255, 255, 255, .6);
    -webkit-text-stroke: 1px #d9d9d9;
    transform: scaleX(.68);
    transform-origin: left center;
    white-space: nowrap;
}

.wm-play {
    width: 60px;
    height: 62px;
}
```
